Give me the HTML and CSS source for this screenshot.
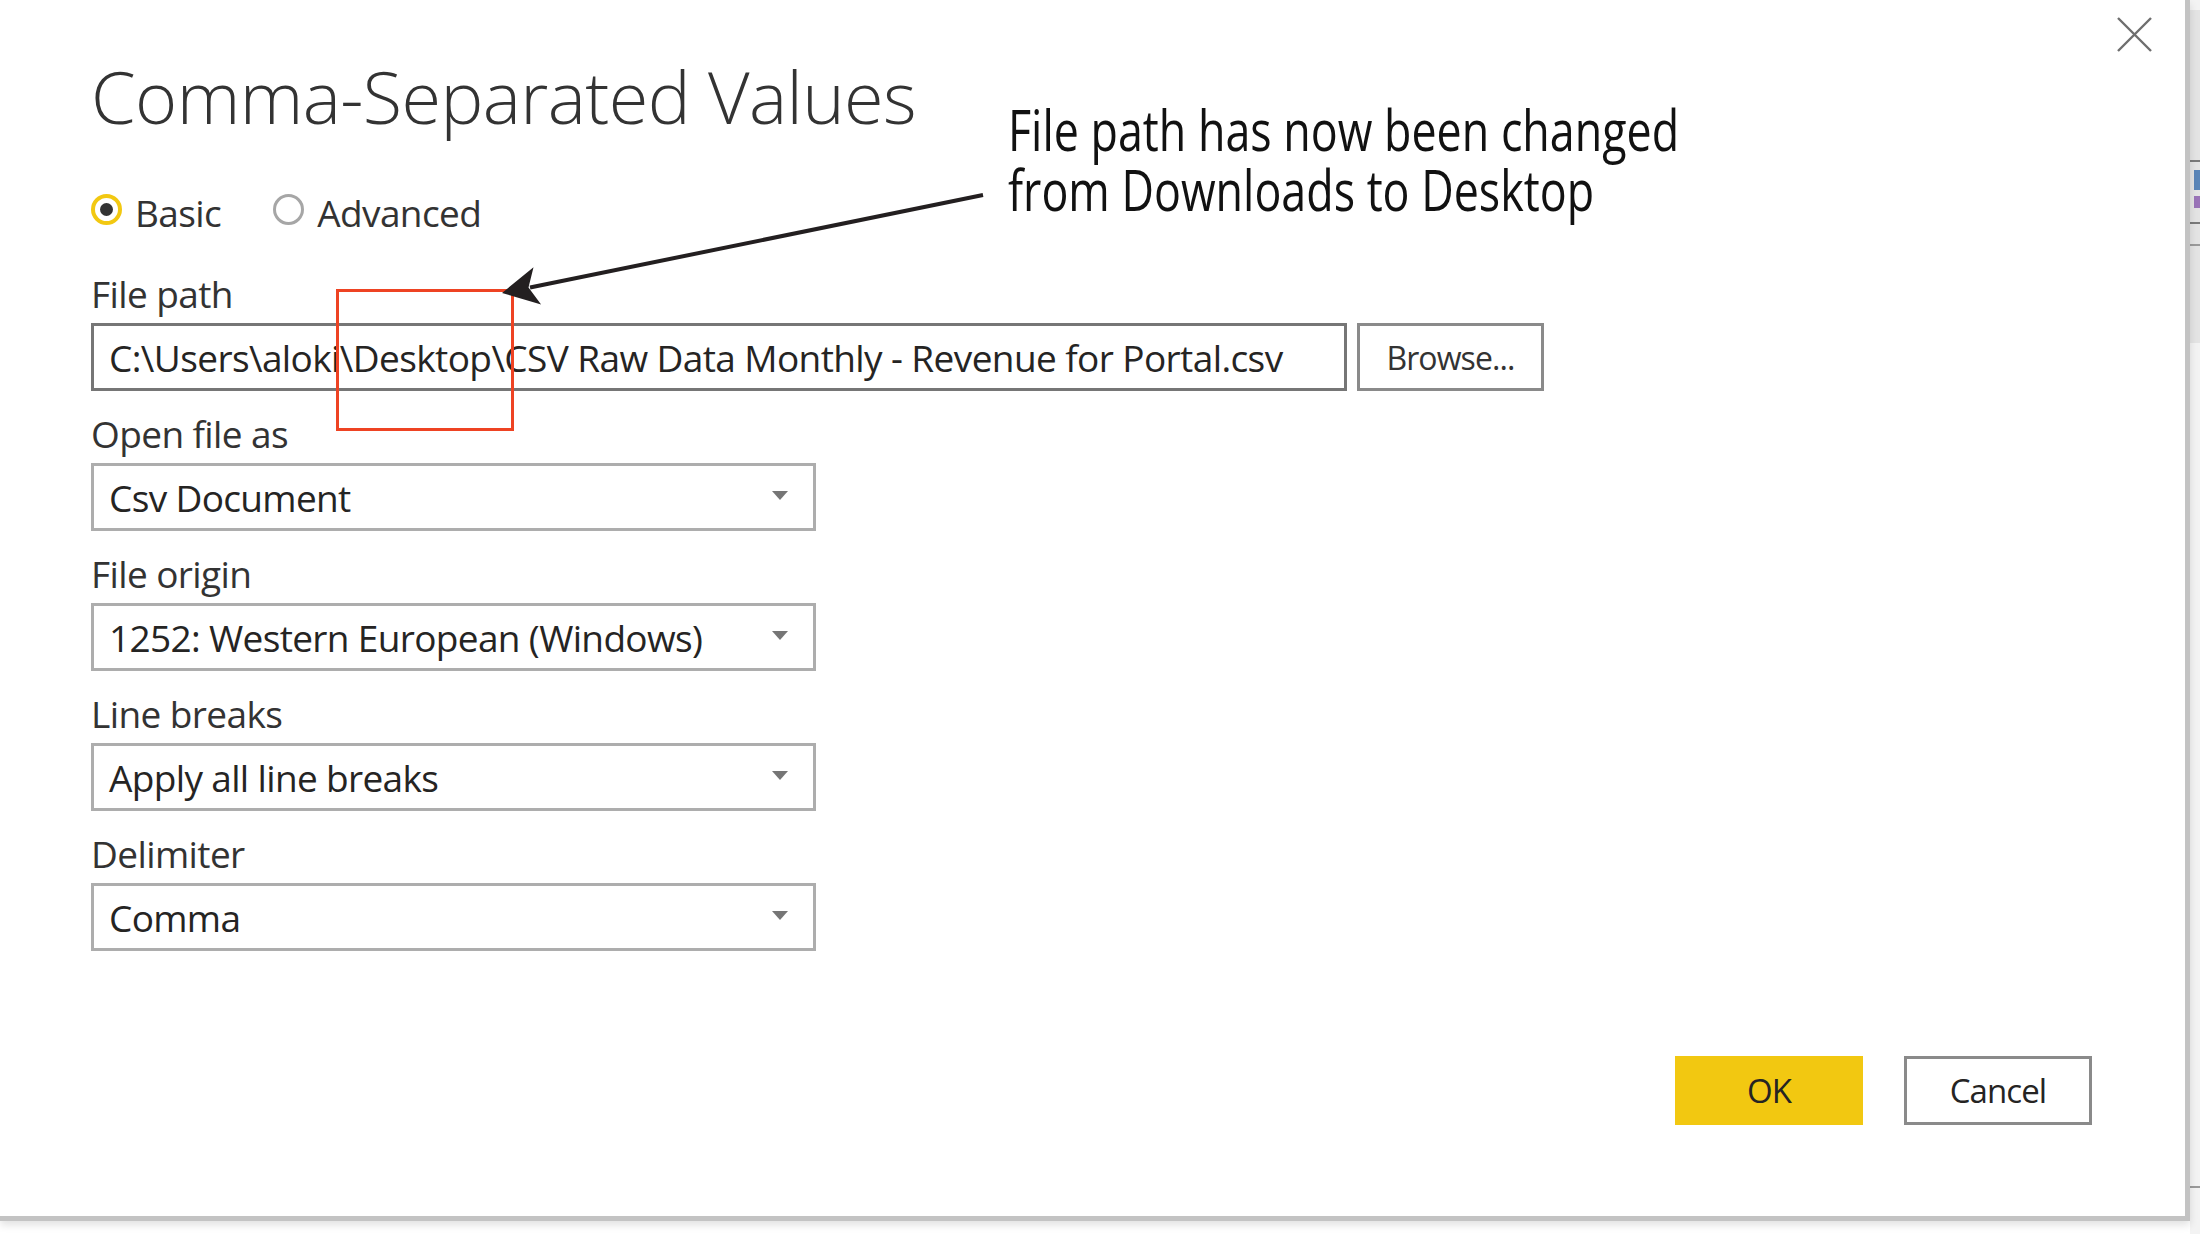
FILE: index.html
```html
<!DOCTYPE html>
<html lang="en">
<head>
<meta charset="utf-8">
<title>Comma-Separated Values</title>
<link rel="stylesheet" href="styles.css">
</head>
<body>
<div class="page">
  <div class="dialog">
    <button class="close" aria-label="Close">
      <svg width="35" height="35" viewBox="0 0 35 35"><path d="M1 1 L34 34 M34 1 L1 34" stroke="#6e6e6e" stroke-width="2.4" fill="none"/></svg>
    </button>
    <h1 class="title">Comma-Separated Values</h1>
    <div class="modes">
      <label class="radio"><span class="dot on"></span><span>Basic</span></label>
      <label class="radio"><span class="dot"></span><span>Advanced</span></label>
    </div>
    <div class="fields">
      <div class="field">
        <div class="label">File path</div>
        <div class="path-row">
          <div class="input">C:\Users\aloki\Desktop\CSV Raw Data Monthly - Revenue for Portal.csv</div>
          <div class="browse">Browse...</div>
        </div>
      </div>
      <div class="field">
        <div class="label">Open file as</div>
        <div class="select"><span>Csv Document</span><svg class="caret" width="16" height="9" viewBox="0 0 16 9"><polygon points="0,0 16,0 8,9" fill="#767676"/></svg></div>
      </div>
      <div class="field">
        <div class="label">File origin</div>
        <div class="select"><span>1252: Western European (Windows)</span><svg class="caret" width="16" height="9" viewBox="0 0 16 9"><polygon points="0,0 16,0 8,9" fill="#767676"/></svg></div>
      </div>
      <div class="field">
        <div class="label">Line breaks</div>
        <div class="select"><span>Apply all line breaks</span><svg class="caret" width="16" height="9" viewBox="0 0 16 9"><polygon points="0,0 16,0 8,9" fill="#767676"/></svg></div>
      </div>
      <div class="field">
        <div class="label">Delimiter</div>
        <div class="select"><span>Comma</span><svg class="caret" width="16" height="9" viewBox="0 0 16 9"><polygon points="0,0 16,0 8,9" fill="#767676"/></svg></div>
      </div>
    </div>
    <div class="footer">
      <div class="btn ok">OK</div>
      <div class="btn cancel">Cancel</div>
    </div>
  </div>
  <div class="strip">
    <div class="strip-top">
      <span class="mark dark m1"></span>
      <span class="icon-blue"></span>
      <span class="icon-purple"></span>
      <span class="mark dark m2"></span>
      <span class="mark light m3"></span>
    </div>
    <span class="mark light m4"></span>
  </div>

  <div class="callout-box"></div>
  <svg class="callout-arrow" width="2200" height="1234" viewBox="0 0 2200 1234">
    <line x1="983" y1="195" x2="530" y2="287.5" stroke="#231f20" stroke-width="4"/>
    <polygon points="502,293 533.5,267.2 528.5,287.6 541.1,304.4" fill="#231f20"/>
  </svg>
  <div class="callout-text">
    <span>File path has now been changed</span>
    <span>from Downloads to Desktop</span>
  </div>
</div>
</body>
</html>
```

FILE: styles.css
```css
* {
  box-sizing: border-box;
  margin: 0;
  padding: 0;
}

html,
body {
  width: 2200px;
  height: 1234px;
  overflow: hidden;
  background: #ffffff;
}

body {
  font-family: "Open Sans", "Noto Sans", sans-serif;
  color: #252423;
}

.page {
  position: relative;
  display: flex;
  width: 2200px;
  height: 1234px;
  background: #ffffff;
}

.dialog {
  position: relative;
  display: flex;
  flex-direction: column;
  width: 2190px;
  height: 1221px;
  padding-left: 91px;
  background: #ffffff;
  border-right: 5px solid #c3c3c3;
  border-bottom: 5px solid #c3c3c3;
  box-shadow: 0 4px 8px rgba(0, 0, 0, 0.12);
}

.close {
  position: absolute;
  top: 17px;
  right: 33px;
  width: 35px;
  height: 35px;
  border: 0;
  background: transparent;
  display: flex;
}

.title {
  margin-top: 60px;
  font-size: 72px;
  line-height: 72px;
  height: 72px;
  font-weight: 300;
  letter-spacing: -0.6px;
  color: #333333;
  white-space: nowrap;
}

.modes {
  display: flex;
  margin-top: 59px;
  height: 44px;
  font-size: 37px;
  line-height: 44px;
  letter-spacing: -0.6px;
  color: #333333;
}

.radio {
  display: flex;
  align-items: flex-start;
  gap: 13px;
  margin-right: 52px;
}

.dot {
  width: 31px;
  height: 31px;
  margin-top: 3px;
  border-radius: 50%;
  border: 3px solid #a6a6a6;
  background: #ffffff;
  display: flex;
  align-items: center;
  justify-content: center;
}

.dot.on {
  border: 4px solid #f2c811;
}

.dot.on::after {
  content: "";
  width: 13px;
  height: 13px;
  border-radius: 50%;
  background: #333333;
}

.fields {
  display: flex;
  flex-direction: column;
  gap: 21px;
  margin-top: 37px;
}

.label {
  font-size: 37px;
  line-height: 44px;
  height: 44px;
  letter-spacing: -0.6px;
  color: #333333;
  white-space: nowrap;
}

.path-row {
  display: flex;
  gap: 10px;
  margin-top: 7px;
}

.input {
  width: 1256px;
  height: 68px;
  border: 3px solid #767676;
  padding-left: 15px;
  display: flex;
  align-items: center;
  font-size: 37px;
  letter-spacing: -0.6px;
  white-space: nowrap;
  overflow: hidden;
  color: #252423;
}

.browse {
  width: 187px;
  height: 68px;
  border: 3px solid #8a8a8a;
  display: flex;
  align-items: center;
  justify-content: center;
  font-size: 32px;
  letter-spacing: -0.9px;
  color: #333333;
}

.select {
  width: 725px;
  height: 68px;
  margin-top: 7px;
  border: 3px solid #adadad;
  padding: 0 25px 0 15px;
  display: flex;
  align-items: center;
  justify-content: space-between;
  font-size: 37px;
  letter-spacing: -0.65px;
  white-space: nowrap;
  color: #252423;
}

.caret {
  margin-top: -3px;
}

.footer {
  display: flex;
  justify-content: flex-end;
  gap: 41px;
  margin-top: 105px;
  padding-right: 93px;
}

.btn {
  width: 188px;
  height: 69px;
  display: flex;
  align-items: center;
  justify-content: center;
  font-size: 33px;
  letter-spacing: -0.9px;
  color: #252423;
}

.btn.ok {
  background: #f2c811;
}

.btn.cancel {
  border: 3px solid #8a8a8a;
  background: #ffffff;
}

.strip {
  flex: 1;
  display: flex;
  flex-direction: column;
  background: #f3f3f3;
}

.strip-top {
  display: flex;
  flex-direction: column;
  margin-top: 10px;
  height: 333px;
  background: #e4e4e4;
}

.mark {
  display: block;
  height: 2px;
}

.mark.dark {
  background: #7a7a7a;
}

.mark.light {
  background: #9a9a9a;
}

.m1 {
  margin-top: 150px;
}

.icon-blue {
  display: block;
  margin: 8px 0 0 4px;
  height: 20px;
  background: #5b86b8;
}

.icon-purple {
  display: block;
  margin: 6px 0 0 4px;
  height: 12px;
  background: #9a74b8;
}

.m2 {
  margin-top: 14px;
}

.m3 {
  margin-top: 20px;
}

.m4 {
  margin-top: 843px;
}

.callout-box {
  position: absolute;
  left: 336px;
  top: 289px;
  width: 178px;
  height: 142px;
  border: 3px solid #ee4323;
}

.callout-arrow {
  position: absolute;
  left: 0;
  top: 0;
  pointer-events: none;
}

.callout-text {
  position: absolute;
  left: 1008px;
  top: 99px;
  display: flex;
  flex-direction: column;
  align-items: flex-start;
  font-family: "Open Sans", "Noto Sans", sans-serif;
  font-size: 56px;
  line-height: 60px;
  color: #111111;
  white-space: nowrap;
  transform: scaleX(0.8);
  transform-origin: left top;
}
```
